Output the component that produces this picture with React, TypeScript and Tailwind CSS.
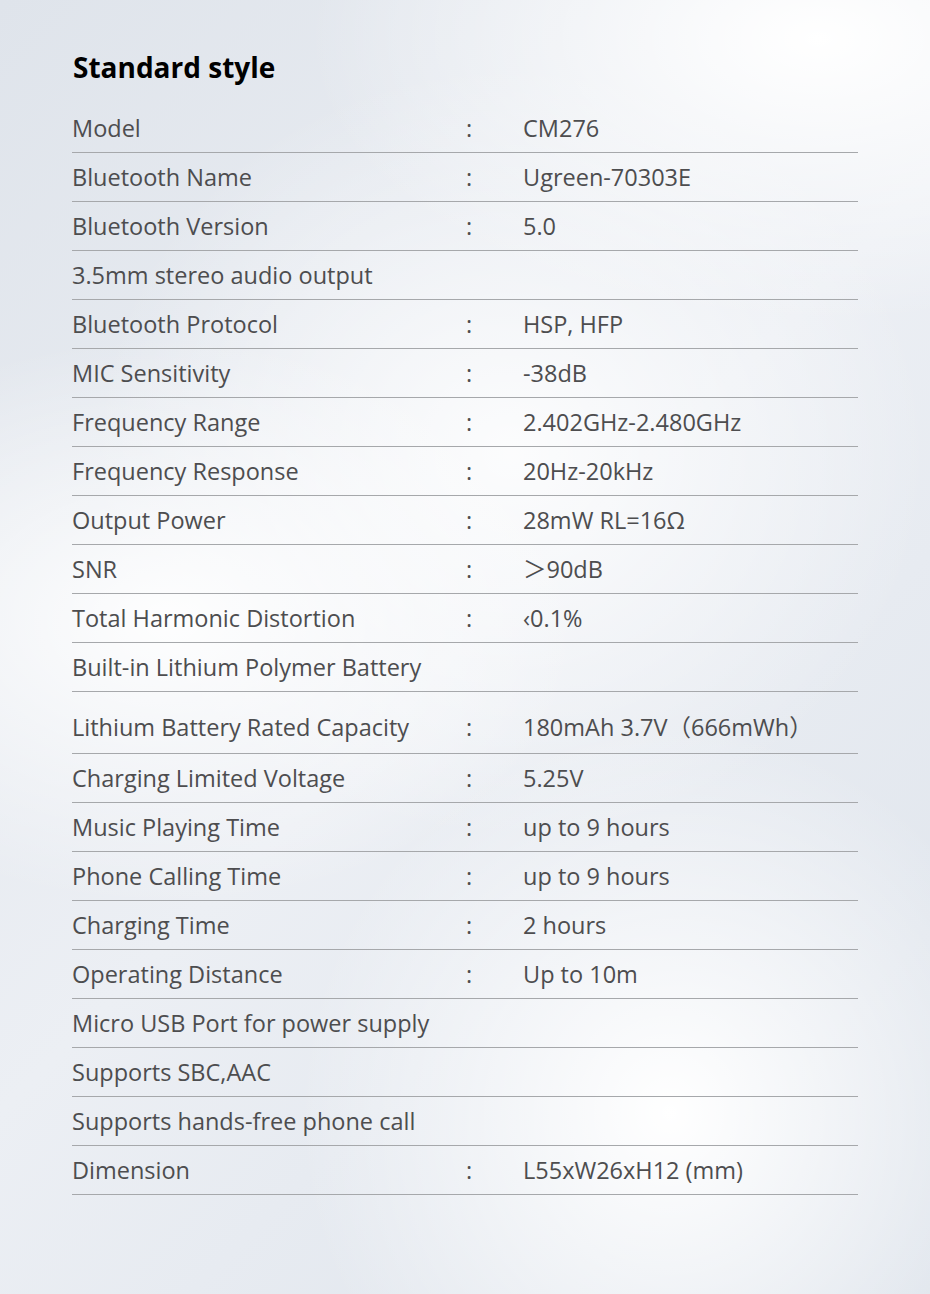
import React from "react";

type Row = { label: string; value?: string; tall?: boolean };

const rows: Row[] = [
  { label: "Model", value: "CM276" },
  { label: "Bluetooth Name", value: "Ugreen-70303E" },
  { label: "Bluetooth Version", value: "5.0" },
  { label: "3.5mm stereo audio output" },
  { label: "Bluetooth Protocol", value: "HSP, HFP" },
  { label: "MIC Sensitivity", value: "-38dB" },
  { label: "Frequency Range", value: "2.402GHz-2.480GHz" },
  { label: "Frequency Response", value: "20Hz-20kHz" },
  { label: "Output Power", value: "28mW RL=16Ω" },
  { label: "SNR", value: "＞90dB" },
  { label: "Total Harmonic Distortion", value: "‹0.1%" },
  { label: "Built-in Lithium Polymer Battery" },
  { label: "Lithium Battery Rated Capacity", value: "180mAh 3.7V（666mWh）", tall: true },
  { label: "Charging Limited Voltage", value: "5.25V" },
  { label: "Music Playing Time", value: "up to 9 hours" },
  { label: "Phone Calling Time", value: "up to 9 hours" },
  { label: "Charging Time", value: "2 hours" },
  { label: "Operating Distance", value: "Up to 10m" },
  { label: "Micro USB Port for power supply" },
  { label: "Supports SBC,AAC" },
  { label: "Supports hands-free phone call" },
  { label: "Dimension", value: "L55xW26xH12 (mm)" },
];

export default function App() {
  return (
    <div
      className="w-[930px] h-[1294px] overflow-hidden bg-[radial-gradient(ellipse_55%_22%_at_88%_3%,#ffffff_0%,rgba(255,255,255,0)_100%),radial-gradient(ellipse_45%_22%_at_18%_48%,rgba(255,255,255,0.95)_0%,rgba(255,255,255,0)_100%),radial-gradient(ellipse_40%_30%_at_72%_86%,#ffffff_0%,rgba(255,255,255,0)_100%),radial-gradient(ellipse_45%_30%_at_55%_35%,rgba(255,255,255,0.85)_0%,rgba(255,255,255,0)_100%),linear-gradient(135deg,#dfe4eb_0%,#eceff4_50%,#dde3eb_100%)]"
      style={{ fontFamily: '"Open Sans", "Noto Sans CJK SC", sans-serif' }}
    >
      <div className="pl-[72px] pr-[72px] pt-[47px]">
        <h1 className="h-[40px] text-[28px] leading-[40px] font-bold text-black tracking-[0px] pl-[1px]">
          Standard style
        </h1>
        <div className="mt-[17px]">
          {rows.map((r, i) => (
            <div
              key={i}
              className={`flex items-center border-b border-[#a6a8ab] text-[23.5px] text-[#4d4d4f] tracking-[0px] ${
                r.tall ? "h-[62px] pt-[10px]" : "h-[49px] pt-[2px]"
              }`}
            >
              <div className="w-[393px] whitespace-nowrap">{r.label}</div>
              {r.value !== undefined && (
                <>
                  <div className="w-[58px] pl-[1px]">:</div>
                  <div className="whitespace-nowrap">{r.value}</div>
                </>
              )}
            </div>
          ))}
        </div>
      </div>
    </div>
  );
}
